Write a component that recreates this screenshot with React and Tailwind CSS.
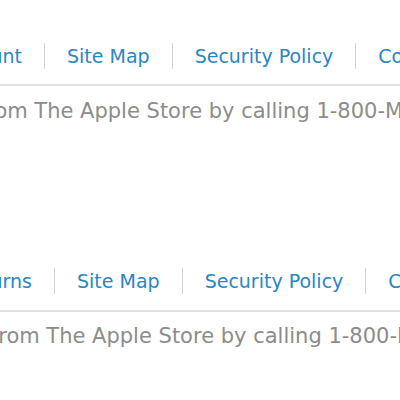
export default function App() {
  const font = { fontFamily: '"DejaVu Sans", "Liberation Sans", sans-serif' };
  const Sep = () => <div className="mx-[22px] h-[26px] w-px shrink-0 bg-[#d4d4d4]" />;
  const Block = ({ firstW, first, grayMl, grayText, rowMt, lineMt, grayMt }) => (
    <div className="w-[400px] overflow-hidden">
      <div className={`flex items-center whitespace-nowrap text-[19px] leading-[26px] text-[#2a86c4] ${rowMt}`}>
        <div className={`flex shrink-0 justify-end ${firstW}`}>
          <span className="shrink-0">{first}</span>
        </div>
        <Sep />
        <span className="shrink-0">Site Map</span>
        <Sep />
        <span className="shrink-0">Security Policy</span>
        <Sep />
        <span className="shrink-0">Contact Us</span>
      </div>
      <div className={`h-[2px] w-full bg-[#e2e2e2] ${lineMt}`} />
      <div className={`whitespace-nowrap text-[21px] leading-[26px] text-[#8c8c8c] ${grayMt} ${grayMl}`}>
        {grayText}
      </div>
    </div>
  );
  return (
    <div className="h-[400px] w-[400px] overflow-hidden bg-white" style={font}>
      <Block
        firstW="w-[22px]"
        first="Your Account"
        grayMl="-ml-[68px]"
        grayText="Buy from The Apple Store by calling 1-800-MY-APPLE (1-800-692-7753)."
        rowMt="mt-[43px]"
        lineMt="mt-[15px]"
        grayMt="mt-[12px]"
      />
      <Block
        firstW="w-[32px]"
        first="Shipping & Returns"
        grayMl="-ml-[56px]"
        grayText="Buy from The Apple Store by calling 1-800-MY-APPLE (1-800-692-7753)."
        rowMt="mt-[144px]"
        lineMt="mt-[16px]"
        grayMt="mt-[11px]"
      />
    </div>
  );
}
